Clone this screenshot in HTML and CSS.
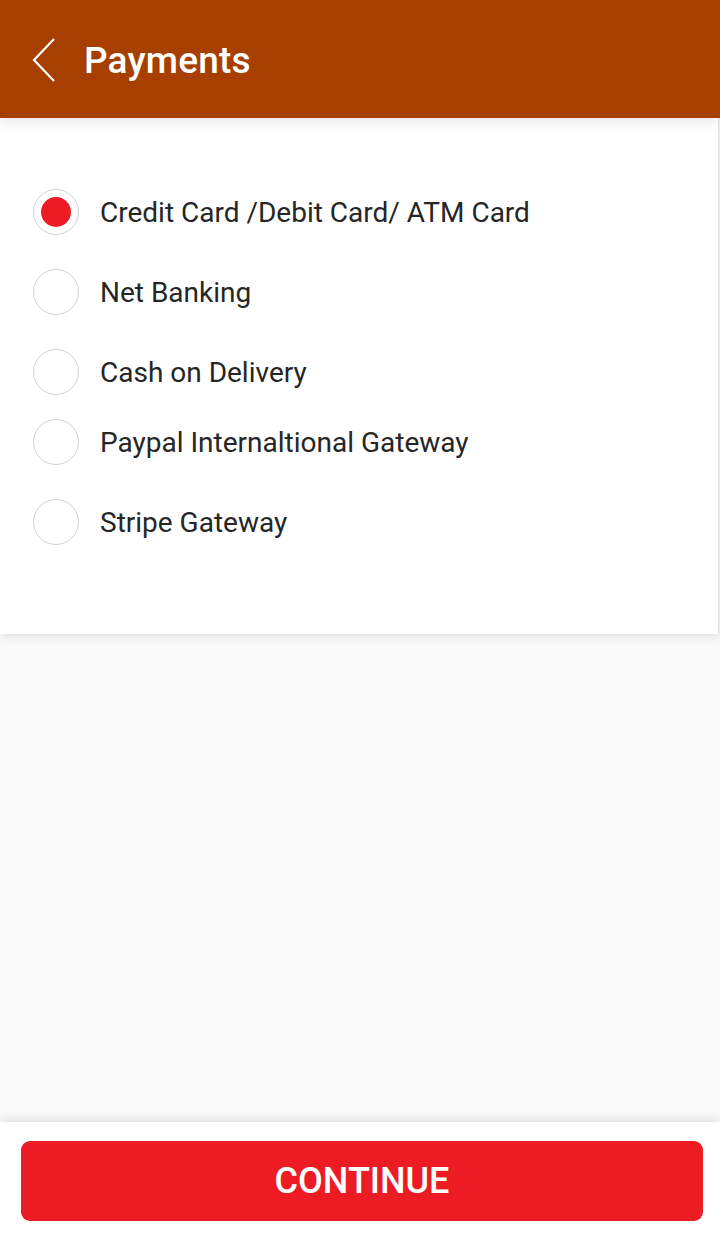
FILE: index.html
```html
<!DOCTYPE html>
<html>
<head>
<meta charset="utf-8">
<link rel="stylesheet" href="styles.css">
</head>
<body>
<div class="app">
  <header class="topbar">
    <svg class="back" width="26" height="46" viewBox="0 0 26 46"><path d="M23 2 L3 23 L23 44" fill="none" stroke="#fff" stroke-width="2.2"/></svg>
    <h1 class="title">Payments</h1>
  </header>
  <section class="card">
    <div class="row"><span class="radio checked"></span><span class="label">Credit Card /Debit Card/ ATM Card</span></div>
    <div class="row"><span class="radio"></span><span class="label">Net Banking</span></div>
    <div class="row"><span class="radio"></span><span class="label">Cash on Delivery</span></div>
    <div class="row tight"><span class="radio"></span><span class="label">Paypal Internaltional Gateway</span></div>
    <div class="row"><span class="radio"></span><span class="label">Stripe Gateway</span></div>
  </section>
  <div class="spacer"></div>
  <footer class="bottom">
    <button class="continue">CONTINUE</button>
  </footer>
</div>
</body>
</html>
```
FILE: styles.css
```css
* { box-sizing: border-box; }
html, body { margin: 0; padding: 0; }
body { background: #fafafa; font-family: Roboto, "Liberation Sans", sans-serif; }
.app { height: 1247px; display: flex; flex-direction: column; overflow: hidden; }
.topbar {
  height: 118px; background: #a63f00; display: flex; align-items: center;
  padding-left: 31px; position: relative; z-index: 2;
  box-shadow: 0 2px 14px rgba(0,0,0,0.12);
}
.back { display: block; margin-top: 1px; }
.title { margin: 3px 0 0 27px; color: #fff; font-size: 37px; font-weight: 500; letter-spacing: 0.2px; }
.card {
  width: 719px; background: #fff; padding: 71px 0 89px 33px;
  box-shadow: 1px 2px 10px rgba(0,0,0,0.12); position: relative; z-index: 1;
  border-right: 1px solid #e2e2e2;
}
.row { display: flex; align-items: center; height: 46px; margin-bottom: 34px; }
.row.tight { margin-top: -10px; }
.row:last-child { margin-bottom: 0; }
.radio {
  width: 46px; height: 46px; border-radius: 50%; border: 1.5px solid #cfcfcf;
  display: flex; align-items: center; justify-content: center; flex: none;
}
.radio.checked::after { content: ""; width: 30px; height: 30px; border-radius: 50%; background: #ed1c24; }
.label { margin-left: 21px; font-size: 28px; color: #262626; }
.spacer { flex: 1; }
.bottom {
  height: 125px; background: #fff; padding: 19px 17px 0 21px;
  box-shadow: 0 -3px 10px rgba(0,0,0,0.1);
}
.continue {
  width: 682px; height: 80px; border: none; border-radius: 9px; background: #ed1c24;
  color: #fff; font-family: Roboto, "Liberation Sans", sans-serif; font-size: 36px; font-weight: 500;
  letter-spacing: 0; display: block; padding: 0;
}
```
